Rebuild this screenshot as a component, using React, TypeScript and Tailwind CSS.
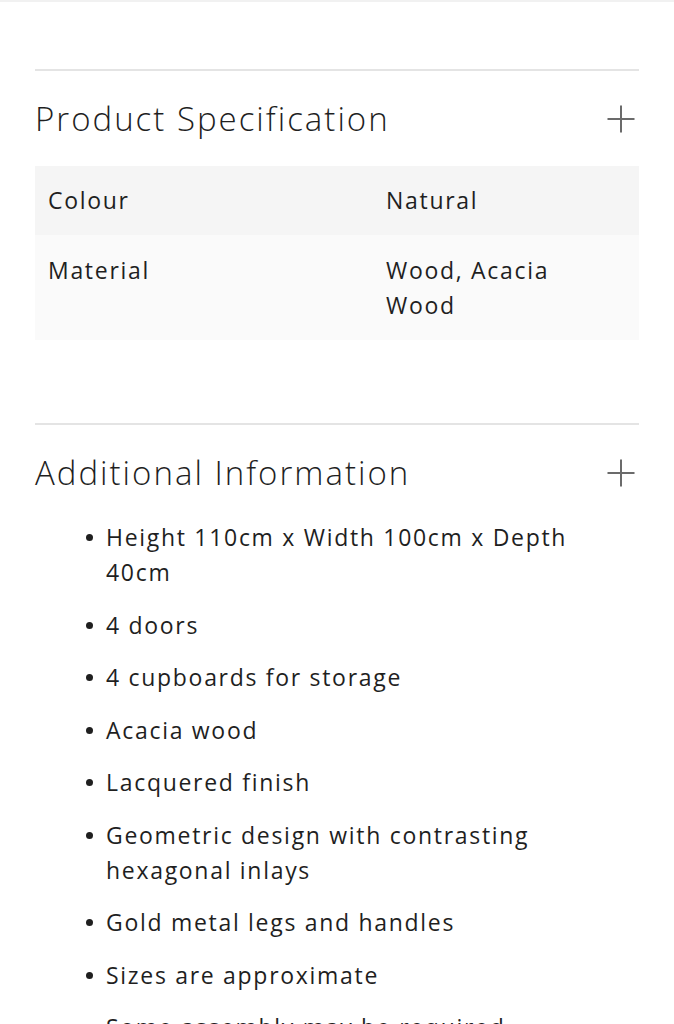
import React from "react";

const specs = [
    { label: "Colour", value: "Natural", row: "bg-[#f5f5f5] py-[17px]" },
    { label: "Material", value: "Wood, Acacia Wood", row: "bg-[#fafafa] pt-[18px] pb-[17px]" },
];

const details = [
    "Height 110cm x Width 100cm x Depth 40cm",
    "4 doors",
    "4 cupboards for storage",
    "Acacia wood",
    "Lacquered finish",
    "Geometric design with contrasting hexagonal inlays",
    "Gold metal legs and handles",
    "Sizes are approximate",
    "Some assembly may be required",
];

const PlusIcon = () => (
    <svg width="30" height="30" viewBox="0 0 30 30" fill="none" xmlns="http://www.w3.org/2000/svg">
        <path d="M15 1.5v27M1.5 15h27" stroke="#6b6b6b" strokeWidth="2" />
    </svg>
);

const SectionHeader = ({ title }: { title: string }) => (
    <div className="border-t-2 border-[#e4e4e4]">
        <div className="h-[95px] flex items-center justify-between pr-[3px]">
            <h2 className="text-[33px] font-light text-[#1f1f1f] tracking-[2px]">{title}</h2>
            <PlusIcon />
        </div>
    </div>
);

export default function App() {
    return (
        <div
            className="min-h-screen bg-white border-t-2 border-[#f1f1f1] text-[#1f1f1f]"
            style={{ fontFamily: '"Open Sans", "Noto Sans", sans-serif' }}
        >
            <div className="px-[35px] pt-[67px]">
                <SectionHeader title="Product Specification" />

                <div className="text-[23px] leading-[35px] tracking-[1.7px]">
                    {specs.map((spec) => (
                        <div key={spec.label} className={`flex ${spec.row}`}>
                            <div className="w-[351px] pl-[13px]">{spec.label}</div>
                            <div className="w-[230px]">{spec.value}</div>
                        </div>
                    ))}
                </div>

                <div className="mt-[83px]">
                    <SectionHeader title="Additional Information" />
                </div>

                <ul className="flex flex-col gap-[17.5px] pl-[51px] text-[23px] leading-[35px] tracking-[1.7px]">
                    {details.map((item) => (
                        <li key={item} className="flex">
                            <span className="w-[20px] shrink-0 flex pt-[14px]">
                                <span className="w-[7px] h-[7px] rounded-full bg-[#1f1f1f]" />
                            </span>
                            <span className="max-w-[470px]">{item}</span>
                        </li>
                    ))}
                </ul>
            </div>
        </div>
    );
}
